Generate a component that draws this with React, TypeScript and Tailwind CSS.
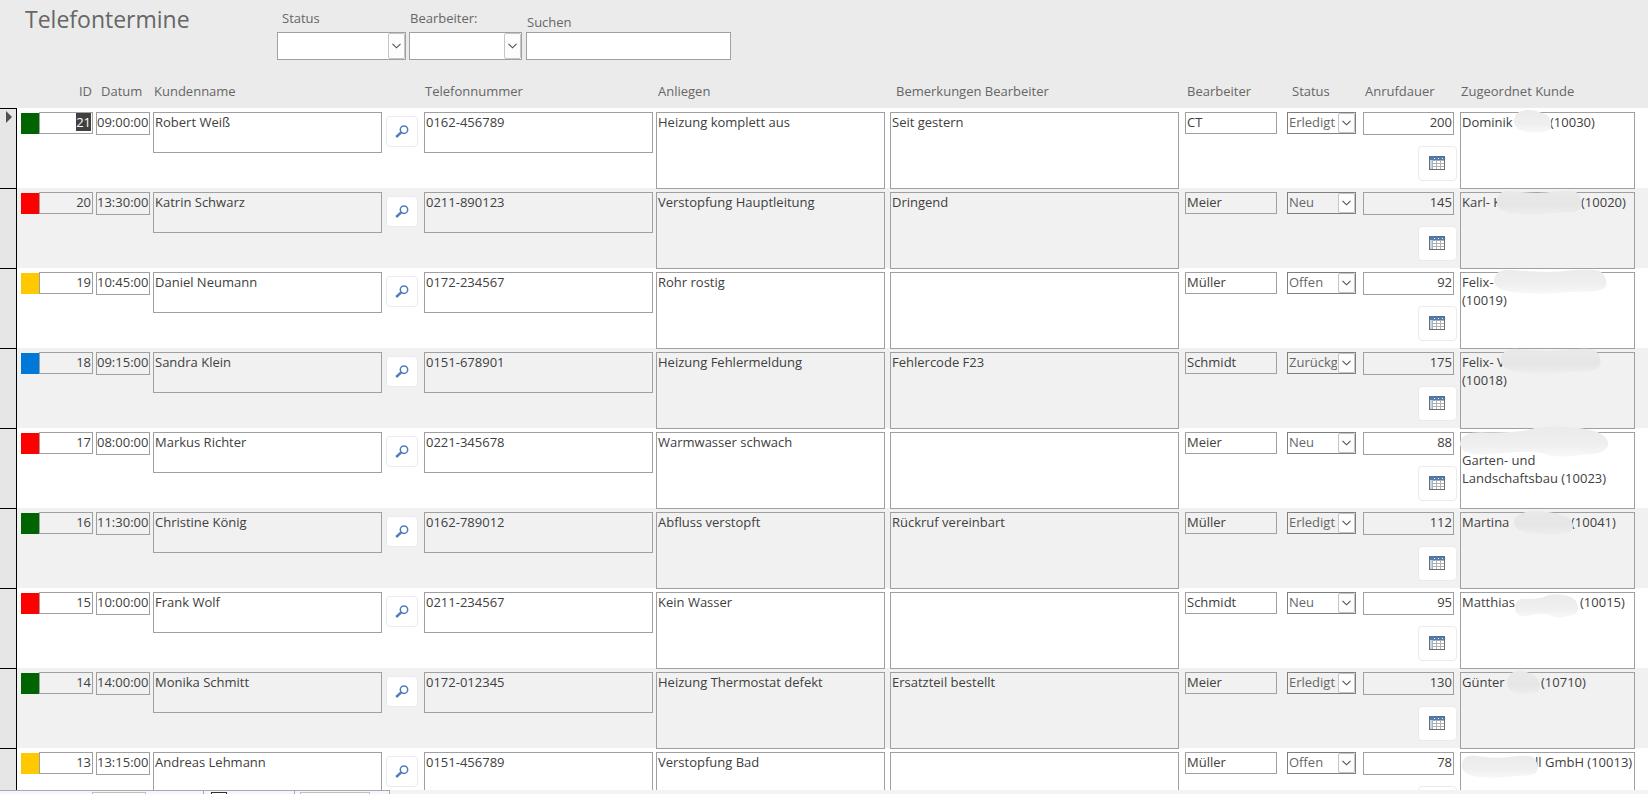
import { useEffect, useRef } from 'react'
import clsx from 'clsx'

type Kunde = {
  vor?: string
  // Breite des Namens inkl. verdecktem Teil, danach folgt die Kundennummer
  breite: number
  nach?: string
  zeilen?: string[]
  maske: { x: number; y: number; w: number; h: number; form: keyof typeof FORMEN }
}

type Termin = {
  id: number
  zeit: string
  name: string
  telefon: string
  anliegen: string
  bemerkung: string
  bearbeiter: string
  status: string
  dauer: number
  kunde: Kunde
}

const FARBEN: Record<string, string> = {
  Erledigt: 'bg-[#006400]',
  Neu: 'bg-[#ff0000]',
  Offen: 'bg-[#ffc800]',
  Zurückg: 'bg-[#0078d7]',
}

const FORMEN = {
  oval: 'M0 20C0 8 12 1 34 0C56 0 70 4 84 8C96 12 101 22 97 31C92 38 74 40 56 39C34 39 0 36 0 20Z',
  lang: 'M0 19C0 7 5 1 14 1C28 3 42 6 58 4C74 1 86 0 93 3C98 7 101 20 99 27C97 35 88 36 76 36C62 37 48 41 34 39C14 38 0 34 0 19Z',
  welle: 'M0 22C1 12 5 8 14 8C28 9 42 8 50 3C62 -1 76 0 88 5C97 8 101 18 100 25C98 35 92 36 82 37C74 40 62 41 56 35C46 31 30 34 18 37C6 38 0 33 0 22Z',
}

const TERMINE: Termin[] = [
  { id: 21, zeit: '09:00:00', name: 'Robert Weiß', telefon: '0162-456789', anliegen: 'Heizung komplett aus', bemerkung: 'Seit gestern', bearbeiter: 'CT', status: 'Erledigt', dauer: 200, kunde: { vor: 'Dominik', breite: 88, nach: '(10030)', maske: { x: 53, y: -2, w: 38, h: 23, form: 'oval' } } },
  { id: 20, zeit: '13:30:00', name: 'Katrin Schwarz', telefon: '0211-890123', anliegen: 'Verstopfung Hauptleitung', bemerkung: 'Dringend', bearbeiter: 'Meier', status: 'Neu', dauer: 145, kunde: { vor: 'Karl- K', breite: 119, nach: '(10020)', maske: { x: 36, y: -2, w: 85, h: 25, form: 'lang' } } },
  { id: 19, zeit: '10:45:00', name: 'Daniel Neumann', telefon: '0172-234567', anliegen: 'Rohr rostig', bemerkung: '', bearbeiter: 'Müller', status: 'Offen', dauer: 92, kunde: { vor: 'Felix-', breite: 146, zeilen: ['(10019)'], maske: { x: 33, y: -3, w: 113, h: 25, form: 'lang' } } },
  { id: 18, zeit: '09:15:00', name: 'Sandra Klein', telefon: '0151-678901', anliegen: 'Heizung Fehlermeldung', bemerkung: 'Fehlercode F23', bearbeiter: 'Schmidt', status: 'Zurückg', dauer: 175, kunde: { vor: 'Felix- V', breite: 146, zeilen: ['(10018)'], maske: { x: 40, y: -4, w: 100, h: 26, form: 'lang' } } },
  { id: 17, zeit: '08:00:00', name: 'Markus Richter', telefon: '0221-345678', anliegen: 'Warmwasser schwach', bemerkung: '', bearbeiter: 'Meier', status: 'Neu', dauer: 88, kunde: { breite: 146, zeilen: ['Garten- und', 'Landschaftsbau (10023)'], maske: { x: -1, y: -6, w: 148, h: 31, form: 'welle' } } },
  { id: 16, zeit: '11:30:00', name: 'Christine König', telefon: '0162-789012', anliegen: 'Abfluss verstopft', bemerkung: 'Rückruf vereinbart', bearbeiter: 'Müller', status: 'Erledigt', dauer: 112, kunde: { vor: 'Martina', breite: 109, nach: '(10041)', maske: { x: 53, y: -1, w: 60, h: 24, form: 'oval' } } },
  { id: 15, zeit: '10:00:00', name: 'Frank Wolf', telefon: '0211-234567', anliegen: 'Kein Wasser', bemerkung: '', bearbeiter: 'Schmidt', status: 'Neu', dauer: 95, kunde: { vor: 'Matthias', breite: 118, nach: '(10015)', maske: { x: 54, y: 2, w: 63, h: 24, form: 'welle' } } },
  { id: 14, zeit: '14:00:00', name: 'Monika Schmitt', telefon: '0172-012345', anliegen: 'Heizung Thermostat defekt', bemerkung: 'Ersatzteil bestellt', bearbeiter: 'Meier', status: 'Erledigt', dauer: 130, kunde: { vor: 'Günter', breite: 79, nach: '(10710)', maske: { x: 46, y: -1, w: 33, h: 24, form: 'oval' } } },
  { id: 13, zeit: '13:15:00', name: 'Andreas Lehmann', telefon: '0151-456789', anliegen: 'Verstopfung Bad', bemerkung: '', bearbeiter: 'Müller', status: 'Offen', dauer: 78, kunde: { breite: 73, nach: 'll GmbH (10013)', maske: { x: 1, y: 3, w: 76, h: 23, form: 'lang' } } },
]

const SPALTEN = 'grid grid-cols-[17px_79px_57px_minmax(0,233fr)_38px_minmax(0,232fr)_minmax(0,234fr)_minmax(0,295fr)_102px_76px_97px_188px]'
const TH = 'font-normal text-left whitespace-nowrap'
const FELD = 'relative block w-full border border-[#a0a0a0] bg-transparent rounded-none outline-none resize-none overflow-hidden leading-[18px]'

function Chevron() {
  return (
    <svg viewBox="0 0 9 6" className="w-[9px] h-[6px]" fill="none" stroke="#505050" strokeWidth="1.1">
      <path d="M.5 .8l4 4 4-4" />
    </svg>
  )
}

function Lupe() {
  return (
    <svg viewBox="0 0 14 13" className="w-[14px] h-[13px]" fill="none" stroke="#4a7ebb">
      <circle cx="9" cy="4.7" r="3.7" strokeWidth="1.5" />
      <path d="M6.2 7.4L1.2 12" strokeWidth="2.4" />
    </svg>
  )
}

function Kalender() {
  return (
    <svg viewBox="0 0 16 14" className="w-4 h-[14px]" shapeRendering="crispEdges">
      <rect width="16" height="14" fill="#6d6d6d" />
      <rect x="1" y="4" width="14" height="9" fill="#b0b0b0" />
      <path d="M1 1h14v3H1z" fill="#4a7ebb" />
      <path d="M5 2h1v1H5zM9 2h1v1H9zM13 2h1v1h-1z" fill="#fff" />
      <path d="M1 4h2v9H1z" fill="#bdd7ee" />
      <path d="M4 5h3v2H4zM8 5h3v2H8zM12 5h3v2h-3zM4 8h3v2H4zM8 8h3v2H8zM12 8h3v2h-3zM4 11h3v2H4zM8 11h3v2H8zM12 11h3v2h-3z" fill="#fff" />
    </svg>
  )
}

function Filter({ id, label, className, labelClass }: { id: string; label: string; className: string; labelClass: string }) {
  return (
    <div className={className}>
      <label htmlFor={id} className={clsx('block pt-[9px] h-8 leading-[18px] whitespace-nowrap', labelClass)}>{label}</label>
      <div className="relative">
        <select id={id} className="block w-full h-7 appearance-none border border-[#a0a0a0] bg-white outline-none">
          <option value=""></option>
        </select>
        <span className="pointer-events-none absolute right-px inset-y-px w-[17px] border border-[#c6c6c6] rounded-xs bg-[#fdfdfd] flex items-center justify-center">
          <Chevron />
        </span>
      </div>
    </div>
  )
}

function KundeFeld({ id, kunde, dunkel }: { id: number; kunde: Kunde; dunkel: boolean }) {
  const { maske } = kunde
  return (
    <div className={clsx(FELD, 'px-px h-[77px] overflow-visible whitespace-nowrap')}>
      <span className="inline-block align-top h-[18px]" style={{ width: kunde.breite }}>{kunde.vor}</span>
      {kunde.nach}
      {kunde.zeilen?.map(z => <div key={z}>{z}</div>)}
      <svg
        viewBox="0 0 100 40"
        preserveAspectRatio="none"
        className="absolute"
        style={{ left: maske.x, top: maske.y - 1, width: maske.w, height: maske.h }}
      >
        <linearGradient id={`maske-${id}`} x1="0" y1="0" x2="0" y2="1">
          <stop offset="0" stopColor={dunkel ? '#e9e9e9' : '#ebebeb'} />
          <stop offset="0.6" stopColor={dunkel ? '#e6e6e6' : '#efefef'} />
          <stop offset="1" stopColor={dunkel ? '#eeeeee' : '#f8f8f8'} />
        </linearGradient>
        <path fill={`url(#maske-${id})`} d={FORMEN[maske.form]} />
      </svg>
    </div>
  )
}

function Zeile({ t, index }: { t: Termin; index: number }) {
  const idRef = useRef<HTMLInputElement>(null)
  const dunkel = index % 2 === 1

  // erster Datensatz ist beim Öffnen aktiv
  useEffect(() => {
    if (index === 0) {
      idRef.current?.focus()
      idRef.current?.select()
    }
  }, [index])

  return (
    <tr className={clsx(SPALTEN, 'h-20', dunkel ? 'bg-[#f1f1f1]' : 'bg-white')}>
      <td className="h-20 border-t border-r border-black bg-[#e6e6e6] pt-[2px] pl-[6px]">
        {index === 0 && (
          <svg viewBox="0 0 6 12" className="w-[6px] h-3" fill="#505050"><path d="M0 0l6 6-6 6z" /></svg>
        )}
      </td>
      <td className="pt-1 pl-1 pr-[3px] flex items-start">
        <span className={clsx('w-[18px] h-[21px] mt-px shrink-0', FARBEN[t.status])} />
        <input
          ref={idRef}
          aria-label="ID"
          defaultValue={t.id}
          className={clsx(FELD, 'px-px h-[22px] pb-[2px] min-w-0 text-right selection:bg-[#404040] selection:text-white')}
        />
      </td>
      <td className="pt-1 pr-[3px]">
        <input aria-label="Datum" defaultValue={t.zeit} className={clsx(FELD, 'px-0 h-[23px] pb-[3px]')} />
      </td>
      <td className="pt-1 pr-1">
        <textarea aria-label="Kundenname" defaultValue={t.name} className={clsx(FELD, 'px-px h-[41px]')} />
      </td>
      <td className="pt-2 pr-[6px]">
        <button type="button" aria-label="Kunde suchen" className="w-8 h-[31px] rounded border border-[#ebebeb] bg-white flex items-center justify-center">
          <Lupe />
        </button>
      </td>
      <td className="pt-1 pr-[3px]">
        <textarea aria-label="Telefonnummer" defaultValue={t.telefon} className={clsx(FELD, 'px-px h-[41px]')} />
      </td>
      <td className="pt-1 pr-[5px]">
        <textarea aria-label="Anliegen" defaultValue={t.anliegen} className={clsx(FELD, 'px-px h-[77px]')} />
      </td>
      <td className="pt-1 pr-[6px]">
        <textarea aria-label="Bemerkungen Bearbeiter" defaultValue={t.bemerkung} className={clsx(FELD, 'px-px h-[77px]')} />
      </td>
      <td className="pt-1 pr-[10px]">
        <input aria-label="Bearbeiter" defaultValue={t.bearbeiter} className={clsx(FELD, 'px-px h-[22px] pb-[2px]')} />
      </td>
      <td className="pt-1 pr-[7px]">
        <div className="relative">
          <select
            aria-label="Status"
            defaultValue={t.status}
            className="block w-full h-[22px] appearance-none border border-[#7f7f7f] bg-transparent pl-px pr-[18px] pb-[2px] leading-[18px] text-[#666666] outline-none"
          >
            {Object.keys(FARBEN).map(s => <option key={s}>{s}</option>)}
          </select>
          <span className="pointer-events-none absolute right-px inset-y-px w-[17px] border border-[#c6c6c6] rounded-xs bg-[#fdfdfd] flex items-center justify-center">
            <Chevron />
          </span>
        </div>
      </td>
      <td className="pt-1 pr-[3px] flex flex-col items-end gap-[11px]">
        <div className="w-full pr-[3px]">
          <input aria-label="Anrufdauer" defaultValue={t.dauer} className={clsx(FELD, 'px-px h-[23px] pb-[3px] text-right')} />
        </div>
        <button type="button" aria-label="Termin im Kalender" className="w-[39px] h-[35px] shrink-0 rounded border border-[#ebebeb] bg-white flex items-center justify-center pr-px pb-px">
          <Kalender />
        </button>
      </td>
      <td className="pt-1 pr-[13px]">
        <KundeFeld id={t.id} kunde={t.kunde} dunkel={dunkel} />
      </td>
    </tr>
  )
}

export default function App() {
  return (
    <div className="h-screen flex flex-col overflow-hidden bg-[#ebebeb] font-['Open_Sans',sans-serif] text-[13px] text-[#404040]">
      <header className="flex items-start h-[82px] shrink-0 text-[#666666]">
        <h1 className="w-[277px] shrink-0 pl-[25px] pt-[3px] text-[23px] leading-8">Telefontermine</h1>
        <Filter id="filter-status" label="Status" className="w-[129px] mr-[3px]" labelClass="pl-[5px]" />
        <Filter id="filter-bearbeiter" label="Bearbeiter:" className="w-[113px] mr-1" labelClass="pl-px" />
        <div className="w-[205px]">
          <label htmlFor="suchen" className="block pl-px pt-[13px] h-8 leading-[18px]">Suchen</label>
          <input id="suchen" className="block w-full h-7 border border-[#a0a0a0] bg-white px-1 outline-none" />
        </div>
      </header>

      <main className="flex-1 min-h-0 overflow-hidden">
        <table className="block w-full">
          <thead className="block text-[#666666]">
            <tr className={clsx(SPALTEN, 'h-[26px] leading-[18px]')}>
              <th />
              <th className="font-normal text-right pr-1">ID</th>
              <th className={clsx(TH, 'pl-[5px]')}>Datum</th>
              <th className={clsx(TH, 'pl-px')}>Kundenname</th>
              <th />
              <th className={clsx(TH, 'pl-px')}>Telefonnummer</th>
              <th className={clsx(TH, 'pl-[2px]')}>Anliegen</th>
              <th className={clsx(TH, 'pl-[6px]')}>Bemerkungen Bearbeiter</th>
              <th className={clsx(TH, 'pl-[2px]')}>Bearbeiter</th>
              <th className={clsx(TH, 'pl-[5px]')}>Status</th>
              <th className={clsx(TH, 'pl-[2px]')}>Anrufdauer</th>
              <th className={clsx(TH, 'pl-px')}>Zugeordnet Kunde</th>
            </tr>
          </thead>
          <tbody className="block">
            {TERMINE.map((t, i) => <Zeile key={t.id} t={t} index={i} />)}
          </tbody>
        </table>
      </main>

      {/* oberer Rand der Navigationsleiste */}
      <footer className="h-1 shrink-0 overflow-hidden bg-[#f3f3f3]">
        <div className="w-[390px] h-6 border-t border-r border-[#a8a8b4] bg-[#f5f6f9] flex items-start">
          <span className="ml-[92px] mt-px w-[54px] h-5 border border-[#c0c0c0] bg-white" />
          <span className="ml-[57px] w-px h-5 bg-[#a8a8b4]" />
          <span className="ml-[7px] mt-px w-4 h-5 border border-[#303030] bg-white" />
          <span className="ml-[67px] w-px h-5 bg-[#a8a8b4]" />
          <span className="ml-[5px] mt-px w-[70px] h-5 border border-[#c0c0c0] bg-white" />
        </div>
      </footer>
    </div>
  )
}
